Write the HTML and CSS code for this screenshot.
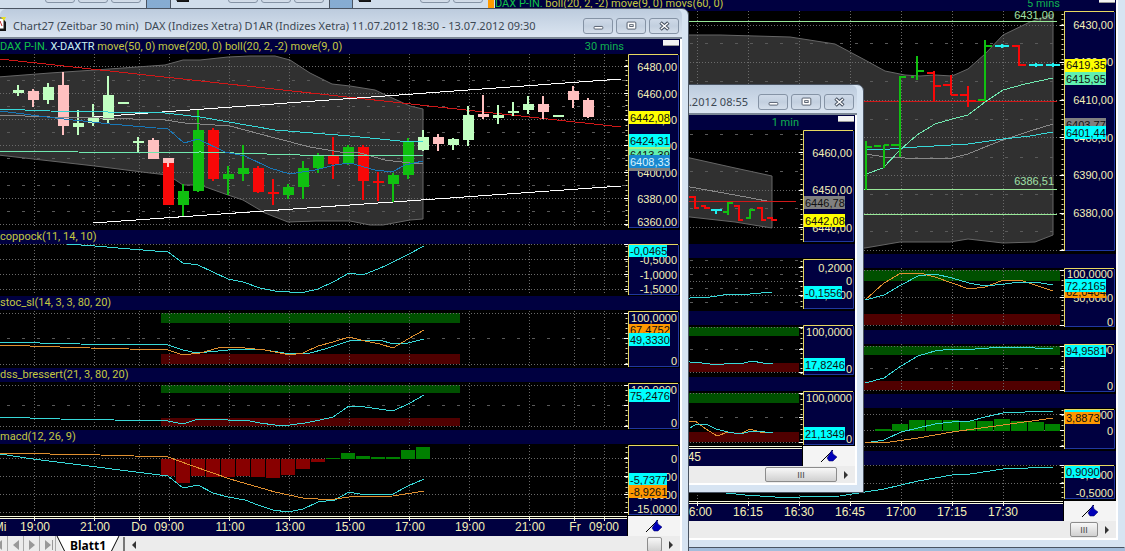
FILE: index.html
```html
<!DOCTYPE html>
<html lang="de">
<head>
<meta charset="utf-8">
<title>Chart27</title>
<link rel="stylesheet" href="styles.css">
</head>
<body>
<svg class="defs" aria-hidden="true">
  <symbol id="min" viewBox="0 0 30 16"><rect x="10.5" y="8.5" width="10" height="3" rx="1" fill="#fff" stroke="#465060"/></symbol>
  <symbol id="max" viewBox="0 0 30 16"><rect x="10.5" y="3.500" width="10" height="8" rx="1" fill="#fff" stroke="#465060"/><rect x="13.500" y="6.500" width="4" height="2" fill="#fff" stroke="#465060"/></symbol>
  <symbol id="close" viewBox="0 0 30 16"><path d="M11 4l9 8M20 4l-9 8" stroke="#465060" stroke-width="4"/><path d="M11.500 4.500l8 7M19.500 4.500l-8 7" stroke="#fff" stroke-width="1.600"/></symbol>
  <symbol id="restore" viewBox="0 0 30 16"><path d="M13.500 5.500v-3h8v6h-3" fill="#fff" stroke="#465060"/><rect x="9.500" y="5.500" width="8" height="6" fill="#fff" stroke="#465060"/><rect x="12.500" y="7.500" width="2" height="2" fill="none" stroke="#465060"/></symbol>
  <symbol id="doc" viewBox="0 0 16 16"><path d="M2 3h9l3 3v9H2z" fill="#111"/><path d="M1 2h9l2 2v9H1z" fill="#fff" stroke="#222"/><path d="M9 1h5l-2 4z" fill="#e8e020"/><path d="M2 10l2-4 2 4 2-5 2 5" fill="none" stroke="#c03030"/></symbol>
  <symbol id="flag" viewBox="0 0 18 14"><path d="M1 13L13 1" stroke="#000"/><path d="M12 1l1 4 4 3-4 4h-4l-2-3z" fill="#0000b8" stroke="#000060" stroke-width=".500"/></symbol>
</svg>
<main class="desktop">

  <section class="win mini mini-a"><span class="grow"></span>
    <button class="wbtn" aria-label="Wiederherstellen"></button><button class="wbtn" aria-label="Maximieren"></button><button class="wbtn" aria-label="Schließen"></button></section>
  <section class="win mini mini-b"><svg class="doc"><use href="#doc"/></svg><span class="grow">Cha...</span>
    <button class="wbtn" aria-label="Wiederherstellen"><svg><use href="#restore"/></svg></button><button class="wbtn" aria-label="Maximieren"><svg><use href="#max"/></svg></button><button class="wbtn" aria-label="Schließen"><svg><use href="#close"/></svg></button></section>
  <section class="win mini mini-c"><svg class="doc"><use href="#doc"/></svg><span class="grow">Cha...</span>
    <button class="wbtn" aria-label="Wiederherstellen"><svg><use href="#restore"/></svg></button><button class="wbtn" aria-label="Maximieren"><svg><use href="#max"/></svg></button></section>

  <section class="win win-five">
    <div class="client">
      <header class="head"><span class="names"><b class="sym">DAX P-IN.</b> boll(20, 2, -2) move(9, 0) movs(60, 0)</span><span class="period">5 mins</span><button class="chip" aria-label="Menü"></button></header>
      <div class="plot"><svg width="621" height="243" viewBox="495 11 621 243">
        <polygon class="band-fill" points="493,36 690,35 720,35 790,37 835,44 865,60 885,71 905,75 920,76 935,75 952,76 968,69 985,54 1003,35 1030,22 1053,14 1053,235 1035,242 1003,243 968,239 950,242 900,242 865,248 690,251 493,251"/>
        <path class="grid" d="M697.500 11V251M748.500 11V251M799.500 11V251M850.500 11V251M901.500 11V251M952.500 11V251M1003.500 11V251M495 25.500H1060M495 62.500H1060M495 100.500H1060M495 137.500H1060M495 175.500H1060M495 213.500H1060M495 250.500H1060"/>
        <path class="sub" d="M495 43.500H1060M495 81.500H1060M495 119.500H1060M495 157.500H1060M495 194.500H1060M495 231.500H1060"/>
        <path class="lime" d="M495 21.500H1057M495 189.500H1057M495 214.500H1057"/>
        <path class="red" d="M495 101.500H1057"/>
        <polyline class="gray" points="866,154 885,157 905,158 952,158 968,154 985,147 1003,140 1030,131 1053,124"/>
        <polyline class="cyan" points="866,149 890,149 917,147 968,144 1003,139 1030,136 1053,132"/>
        <polyline class="mint" points="866,174 883,168 900,150 917,135 935,124 952,119 968,115 985,102 1003,90 1025,84 1053,78"/>
        <path class="bar thin up" d="M866 141V190M866 147H872M874 146H881M884 168V145M884 145H889M891 145H900M900 157V76M900 77H906M911 77H914M917 56V80M917 71H924M978 100H986M985 101V40M985 46H992"/>
        <path class="bar thin down" d="M927 73H934M934 71V101M935 86H941M943 85H951M951 75V95M951 95H958M960 95H968M968 86V107M968 101H976M1012 46H1019V65H1026"/>
        <path class="bar thin flat" d="M995 46H1009M1002 44V48M1029 65H1043M1036 63V67M1046 65H1060M1053 63V67"/>
        <text class="val level" x="1054" y="19">6431,00</text><text class="val level" x="1054" y="185">6386,51</text>
        <rect class="axis" x="1064" y="11" width="50" height="240"/><path class="edge-a" d="M1064.500 251V11.500H1114"/><path class="edge-b" d="M1065 250.500H1114.500V12"/>
        <path class="minor" d="M1062.500 14V251"/><path class="major" d="M1060 25.500h4M1060 62.500h4M1060 100.500h4M1060 137.500h4M1060 175.500h4M1060 213.500h4M1060 250.500h4"/>
        <g class="val"><text x="1113" y="29">6430,00</text><text x="1113" y="66">6420,00</text><text x="1113" y="104">6410,00</text><text x="1113" y="142">6400,00</text><text x="1113" y="179">6390,00</text><text x="1113" y="217">6380,00</text></g>
        <g class="tag"><rect class="f-yellow" x="1065" y="59" width="41" height="13"/><text x="1066" y="69">6419,35</text>
        <rect class="f-mint" x="1065" y="72" width="41" height="13"/><text x="1066" y="83">6415,95</text>
        <rect class="f-gray" x="1065" y="118" width="41" height="13"/><text x="1066" y="129">6403,77</text>
        <rect class="f-cyan" x="1065" y="126" width="41" height="13"/><text x="1066" y="137">6401,44</text></g>
      </svg></div>
      <header class="band"></header>
      <div class="plot"><svg width="621" height="62" viewBox="495 268 621 62">
        <rect class="hi" x="495" y="270" width="565" height="11"/><rect class="lo" x="495" y="314" width="565" height="11"/>
        <path class="grid" d="M901.500 268V327M952.500 268V327M1003.500 268V327M495 270.500H1060M495 297.500H1060M495 325.500H1060"/>
        <polyline class="orange" points="865,300 884,283 901,273 920,273 935,277 952,283 969,289 985,287 1001,281 1020,280 1035,285 1053,291"/>
        <polyline class="cyan" points="865,300 884,295 901,285 918,276 935,274 952,278 969,283 985,286 1005,284 1020,282 1035,282 1053,285"/>
        <rect class="axis" x="1064" y="268" width="50" height="59"/><path class="edge-a" d="M1064.500 327V268.500H1114"/><path class="edge-b" d="M1065 326.500H1114.500V269"/>
        <path class="minor" d="M1062.500 270V327"/><path class="major" d="M1060 270.500h4M1060 297.500h4M1060 325.500h4"/>
        <g class="val"><text x="1113" y="278">100,0000</text><text x="1113" y="302">50,0000</text><text x="1113" y="326">0</text></g>
        <g class="tag"><rect class="f-orange" x="1065" y="285" width="41" height="13"/><text x="1066" y="296">62,0404</text>
        <rect class="f-cyan" x="1065" y="279" width="41" height="13"/><text x="1066" y="290">72,2165</text></g>
      </svg></div>
      <header class="band"></header>
      <div class="plot"><svg width="621" height="50" viewBox="495 344 621 50">
        <rect class="hi" x="495" y="346" width="565" height="9"/><rect class="lo" x="495" y="381" width="565" height="9"/>
        <path class="grid" d="M901.500 344V392M952.500 344V392M1003.500 344V392M495 346.500H1060M495 390.500H1060"/><path class="sub" d="M495 368.500H1060"/>
        <polyline class="cyan" points="865,383 884,378 901,366 918,356 935,351 952,349 975,349 1003,347 1020,347 1035,348 1053,348"/>
        <rect class="axis" x="1064" y="344" width="50" height="48"/><path class="edge-a" d="M1064.500 392V344.500H1114"/><path class="edge-b" d="M1065 391.500H1114.500V345"/>
        <path class="minor" d="M1062.500 346V391"/><path class="major" d="M1060 346.500h4M1060 368.500h4M1060 390.500h4"/>
        <g class="val"><text x="1113" y="354">100,0000</text><text x="1113" y="390">0</text></g>
        <g class="tag"><rect class="f-cyan" x="1065" y="345" width="41" height="12"/><text x="1066" y="355">94,9581</text></g>
      </svg></div>
      <header class="band"></header>
      <div class="plot"><svg width="621" height="43" viewBox="495 408 621 43">
        <path class="grid" d="M901.500 408V449M952.500 408V449M1003.500 408V449M495 414.500H1060M495 430.500H1060M495 446.500H1060"/>
        <path class="bar-up" d="M875 429h16v2h-16zM892 424h16v7h-16zM909 420h16v11h-16zM926 420h16v11h-16zM943 420h16v11h-16zM960 421h16v10h-16zM977 421h16v10h-16zM994 419h16v12h-16zM1011 421h16v10h-16zM1028 422h16v9h-16zM1045 424h15v7h-15z"/>
        <polyline class="cyan" points="865,443 884,440 901,432 918,428 935,424 952,422 970,421 985,417 1003,413 1025,412 1053,411"/>
        <polyline class="orange" points="865,443 890,442 918,438 952,432 1003,425 1053,418"/>
        <rect class="axis" x="1064" y="409" width="50" height="40"/><path class="edge-a" d="M1064.500 449V409.500H1114"/><path class="edge-b" d="M1065 448.500H1114.500V410"/>
        <path class="minor" d="M1062.500 410V447"/><path class="major" d="M1060 414.500h4M1060 430.500h4M1060 446.500h4"/>
        <g class="val"><text x="1113" y="419">5,0000</text><text x="1113" y="435">0</text></g>
        <g class="tag"><rect class="f-cyan" x="1065" y="410" width="35" height="12"/><rect class="f-orange" x="1065" y="412" width="35" height="12"/><text x="1066" y="422">3,8873</text></g>
      </svg></div>
      <header class="band"></header>
      <div class="plot"><svg width="621" height="36" viewBox="495 465 621 36">
        <path class="grid" d="M697.500 465V501M748.500 465V501M799.500 465V501M850.500 465V501M901.500 465V501M952.500 465V501M1003.500 465V501M495 465.500H1060M495 483.500H1060"/>
        <polyline class="cyan" points="726,493 745,495 775,497 800,497 840,496 865,492 884,489 918,481 952,475 970,474 1003,469 1053,467"/>
        <rect class="axis" x="1064" y="465" width="50" height="34"/><path class="edge-a" d="M1064.500 499V465.500H1114"/><path class="edge-b" d="M1065 498.500H1114.500V466"/>
        <path class="minor" d="M1062.500 467V499"/><path class="major" d="M1060 465.500h4M1060 483.500h4"/>
        <g class="val"><text x="1113" y="479">0,0000</text><text x="1113" y="497">-0,5000</text></g>
        <g class="tag"><rect class="f-cyan" x="1065" y="466" width="35" height="12"/><text x="1066" y="476">0,9090</text></g>
      </svg></div>
      <div class="plot"><svg width="621" height="20" viewBox="495 501 621 20">
        <rect class="axis" x="495" y="504" width="568" height="17"/><path class="rule" d="M495 501.500H1063M495 503.500H1063M697.500 501v5M748.500 501v5M799.500 501v5M850.500 501v5M901.500 501v5M952.500 501v5M1003.500 501v5"/>
        <g class="time"><text x="697" y="516">16:00</text><text x="748" y="516">16:15</text><text x="799" y="516">16:30</text><text x="850" y="516">16:45</text><text x="901" y="516">17:00</text><text x="952" y="516">17:15</text><text x="1003" y="516">17:30</text></g>
        <rect class="corner" x="1064" y="501" width="52" height="20"/><use href="#flag" x="1081" y="504" width="18" height="14"/>
      </svg></div>
      <div class="scroll"><span class="grow"></span><button class="thumb thumb-s" aria-label="Bildlauf">III</button><button class="arrow" aria-label="Rechts"></button></div>
    </div>
  </section>

  <section class="win win-one">
    <header class="title"><h2 class="grow right">13.07.2012 08:55</h2>
      <button class="wbtn" aria-label="Minimieren"><svg><use href="#min"/></svg></button><button class="wbtn" aria-label="Maximieren"><svg><use href="#max"/></svg></button><button class="wbtn" aria-label="Schließen"><svg><use href="#close"/></svg></button></header>
    <div class="client">
      <header class="head"><span class="names"></span><span class="period">1 min</span><button class="chip" aria-label="Menü"></button></header>
      <div class="plot"><svg width="255" height="114" viewBox="600 130 255 114">
        <polygon class="band-fill" points="598,140 690,158 735,168 772,176 772,228 735,222 690,217 598,210"/>
        <path class="grid" d="M600 152.500H800M600 190.500H800M600 227.500H800"/><path class="sub" d="M600 134.500H800M600 171.500H800M600 208.500H800"/>
        <polyline class="gray" points="600,172 690,187 735,195 772,202"/><path class="red" d="M600 201.500H796"/>
        <path class="bar thin down" d="M689 197H695V208H699M701 206H705V208H710M734 206H739V220H743M757 208H762V220H766M767 218H772V220H777"/>
        <path class="bar thin up" d="M723 212H728V215V203H733M746 218H750V210H755"/><path class="bar thin flat" d="M711 210H722M716 209V214"/>
        <rect class="axis" x="803" y="130" width="50" height="112"/><path class="edge-a" d="M803.500 242V130.500H853"/><path class="edge-b" d="M804 241.500H853.500V131"/>
        <path class="minor" d="M801.500 134V242"/><path class="major" d="M799 152.500h4M799 190.500h4M799 227.500h4"/>
        <g class="val"><text x="852" y="157">6460,00</text><text x="852" y="194">6450,00</text><text x="852" y="232">6440,00</text></g>
        <g class="tag"><rect class="f-gray" x="804" y="196" width="41" height="13"/><text x="805" y="207">6446,78</text>
        <rect class="f-yellow" x="804" y="214" width="41" height="13"/><text x="805" y="225">6442,08</text></g>
      </svg></div>
      <header class="band"></header>
      <div class="plot"><svg width="255" height="53" viewBox="600 258 255 53">
        <path class="grid" d="M600 267.500H800M600 281.500H800M600 295.500H800"/><path class="sub" d="M600 260.500H800M600 274.500H800M600 288.500H800M600 302.500H800"/>
        <polyline class="cyan" points="600,304 690,298 710,297 730,294 750,294 772,292"/>
        <rect class="axis" x="803" y="259" width="50" height="50"/><path class="edge-a" d="M803.500 309V259.500H853"/><path class="edge-b" d="M804 308.500H853.500V260"/>
        <path class="minor" d="M801.500 261V307"/><path class="major" d="M799 267.500h4M799 281.500h4M799 295.500h4"/>
        <g class="val"><text x="852" y="272">0,2000</text><text x="852" y="285">0</text><text x="852" y="299">-0,2000</text></g>
        <g class="tag"><rect class="f-cyan" x="804" y="286" width="38" height="13"/><text x="805" y="297">-0,1556</text></g>
      </svg></div>
      <header class="band"></header>
      <div class="plot"><svg width="255" height="52" viewBox="600 325 255 52">
        <rect class="hi" x="600" y="327" width="199" height="9"/><rect class="lo" x="600" y="363" width="199" height="9"/>
        <path class="grid" d="M600 327.500H800M600 372.500H800"/><path class="sub" d="M600 349.500H800"/>
        <polyline class="cyan" points="600,360 690,362 702,363 718,365 730,363 740,364 752,361 763,363 773,364"/>
        <rect class="axis" x="803" y="325" width="50" height="50"/><path class="edge-a" d="M803.500 375V325.500H853"/><path class="edge-b" d="M804 374.500H853.500V326"/>
        <path class="minor" d="M801.500 328V374"/><path class="major" d="M799 327.500h4M799 349.500h4M799 372.500h4"/>
        <g class="val"><text x="852" y="336">100,0000</text><text x="852" y="373">0</text></g>
        <g class="tag"><rect class="f-cyan" x="804" y="358" width="41" height="13"/><text x="805" y="369">17,8246</text></g>
      </svg></div>
      <header class="band"></header>
      <div class="plot"><svg width="255" height="55" viewBox="600 391 255 55">
        <rect class="hi" x="600" y="393" width="199" height="10"/><rect class="lo" x="600" y="432" width="199" height="10"/>
        <path class="grid" d="M600 393.500H800M600 442.500H800"/><path class="sub" d="M600 417.500H800"/>
        <polyline class="orange" points="600,425 690,421 695,421 706,429 717,436 728,432 740,434 750,429 760,432 773,433"/>
        <polyline class="cyan" points="600,430 690,428 695,425 706,424 716,429 728,432 740,434 752,431 765,432 773,432"/>
        <rect class="axis" x="803" y="391" width="50" height="54"/><path class="edge-a" d="M803.500 445V391.500H853"/><path class="edge-b" d="M804 444.500H853.500V392"/>
        <path class="minor" d="M801.500 394V444"/><path class="major" d="M799 393.500h4M799 417.500h4M799 442.500h4"/>
        <g class="val"><text x="852" y="402">100,0000</text><text x="852" y="443">0</text></g>
        <g class="tag"><rect class="f-cyan" x="804" y="427" width="41" height="13"/><text x="805" y="438">21,1349</text></g>
      </svg></div>
      <div class="plot"><svg width="255" height="20" viewBox="600 446 255 20">
        <rect class="axis" x="600" y="449" width="202" height="17"/><path class="rule" d="M600 446.500H802M600 448.500H802"/>
        <g class="time"><text x="686" y="461">16:45</text></g>
        <rect class="corner" x="803" y="446" width="52" height="20"/><use href="#flag" x="820" y="449" width="18" height="14"/>
      </svg></div>
      <div class="scroll"><span class="grow"></span><button class="thumb thumb-l" aria-label="Bildlauf">III</button><button class="arrow" aria-label="Rechts"></button></div>
    </div>
  </section>

  <section class="win win-main">
    <header class="title"><svg class="doc"><use href="#doc"/></svg><h1 class="grow">Chart27 (Zeitbar 30 min)&nbsp; DAX (Indizes Xetra) D1AR (Indizes Xetra) 11.07.2012 18:30 - 13.07.2012 09:30</h1>
      <button class="wbtn" aria-label="Minimieren"><svg><use href="#min"/></svg></button><button class="wbtn" aria-label="Maximieren"><svg><use href="#max"/></svg></button><button class="wbtn" aria-label="Schließen"><svg><use href="#close"/></svg></button></header>
    <div class="client">
      <header class="head"><span class="names"><b class="sym">DAX P-IN.</b> <b class="sym2">X-DAXTR</b> move(50, 0) move(200, 0) boll(20, 2, -2) move(9, 0)</span><span class="period">30 mins</span><button class="chip" aria-label="Menü"></button></header>
      <div class="plot"><svg width="680" height="176" viewBox="0 54 680 176">
        <polygon class="band-fill" points="-2,77 50,73 95,70 165,65 183,60 200,60 228,57 250,56 275,56 290,60 310,73 332,84 350,86 375,90 390,97 410,106 423,109 423,219 410,220 383,225 370,225 350,221 316,221 288,222 265,213 243,200 228,195 200,185 183,185 168,175 150,173 95,166 -2,155"/>
        <path class="grid" d="M34.500 54V228M94.500 54V228M139.500 54V228M169.500 54V228M229.500 54V228M289.500 54V228M349.500 54V228M409.500 54V228M469.500 54V228M529.500 54V228M574.500 54V228M604.500 54V228M0 66.500H625M0 93.500H625M0 119.500H625M0 145.500H625M0 172.500H625M0 198.500H625M0 224.500H625"/>
        <path class="sub" d="M7 80.500H625M7 106.500H625M7 132.500H625M7 158.500H625M7 185.500H625M7 211.500H625"/>
        <path class="red" d="M0 59L621 127"/><path class="white" d="M93 117L621 79M93 223L621 186"/>
        <path class="wick paleup" d="M18 85V96M48 83V104M78 110V135M93 104V126M108 76V123M138 137V152M423 130V151M453 138V150M468 106V146M498 105V124M513 102V116M528 96V114"/>
        <path class="wick paledown" d="M33 89V107M63 72V135M153 138V159M168 158V167M438 134V151M483 95V119M543 96V119M573 86V108M588 98V118"/>
        <path class="wick up" d="M183 184V216M198 110V192M228 166V195M243 145V181M288 184V199M303 161V199M318 153V173M348 145V165M393 173V202M408 138V179"/>
        <path class="wick down" d="M213 128V181M258 166V193M273 179V205M333 137V179M363 145V200M378 172V201"/>
        <path class="body paleup" d="M18 90V93M48 87V100M78 123V127M93 118V123M108 95V120M123 102V104M138 141V143M423 137V150M453 139V145M468 115V140M498 115V118M513 111V113M528 104V110M558 115V117"/>
        <path class="body paledown" d="M33 91V100M63 85V126M153 140V159M168 158V163M438 137V144M483 114V117M543 104V112M573 91V100M588 100V117"/>
        <path class="body up" d="M183 191V205M198 130V191M228 174V179M243 168V174M288 187V195M303 168V187M318 155V168M348 147V164M393 175V184M408 141V175"/>
        <path class="body down" d="M168 163V205M213 130V179M258 168V192M273 192V194M333 155V164M363 147V181M378 181V183"/>
        <path class="wick paledown" d="M168 162V167"/>
        <polyline class="gray" points="0,115 50,117 100,118 165,120 185,123 230,126 275,138 310,147 340,152 360,153 385,160 410,163 423,164"/>
        <polyline class="mint" points="0,151 78,152 140,153 200,152 300,155 423,155"/>
        <polyline class="cyan" points="0,109 50,111 165,113 200,117 275,130 350,136 400,141 423,141"/>
        <polyline class="blue" points="0,111 55,118 110,124 168,129 184,143 198,139 225,152 245,156 270,168 290,174 315,170 335,165 350,163 375,170 392,172 405,165 423,161"/>
        <rect class="axis" x="628" y="54" width="50" height="174"/><path class="edge-a" d="M628.500 228V54.500H678"/><path class="edge-b" d="M629 227.500H678.500V55"/>
        <path class="minor" d="M626.500 60V228"/><path class="major" d="M624 66.500h4M624 93.500h4M624 119.500h4M624 145.500h4M624 172.500h4M624 198.500h4M624 224.500h4"/>
        <g class="val"><text x="677" y="71">6480,00</text><text x="677" y="98">6460,00</text><text x="677" y="124">6440,00</text><text x="677" y="150">6420,00</text><text x="677" y="177">6400,00</text><text x="677" y="203">6380,00</text><text x="677" y="226">6360,00</text></g>
        <g class="tag"><rect class="f-yellow" x="629" y="111" width="41" height="13"/><text x="630" y="122">6442,08</text>
        <rect class="f-gray" x="629" y="157" width="41" height="14"/>
        <rect class="f-lime" x="629" y="145" width="41" height="12"/><rect class="f-mint" x="629" y="149" width="41" height="12"/><text x="630" y="159">6413,39</text>
        <rect class="f-cyan" x="629" y="134" width="41" height="13"/><text x="630" y="145">6424,31</text>
        <rect class="f-blue" x="629" y="155" width="41" height="13"/><text class="light" x="630" y="166">6408,33</text></g>
      </svg></div>
      <header class="band">coppock(11, 14, 10)</header>
      <div class="plot"><svg width="680" height="52" viewBox="0 244 680 52">
        <path class="grid" d="M34.500 244V294M94.500 244V294M139.500 244V294M169.500 244V294M229.500 244V294M289.500 244V294M349.500 244V294M409.500 244V294M469.500 244V294M529.500 244V294M574.500 244V294M604.500 244V294M0 244.500H625M0 259.500H625M0 274.500H625M0 289.500H625"/>
        <polyline class="cyan" points="67,244 95,246 130,249 168,252 183,263 198,265 228,279 243,282 260,288 275,291 290,292 305,292 318,289 335,281 349,273 363,275 385,266 409,254 424,246"/>
        <rect class="axis" x="628" y="244" width="50" height="51"/><path class="edge-a" d="M628.500 295V244.500H678"/><path class="edge-b" d="M629 294.500H678.500V245"/>
        <path class="minor" d="M626.500 246V293"/><path class="major" d="M624 244.500h4M624 259.500h4M624 274.500h4M624 289.500h4"/>
        <g class="val"><text x="677" y="264">-0,5000</text><text x="677" y="279">-1,0000</text><text x="677" y="293">-1,5000</text></g>
        <g class="tag"><rect class="f-cyan" x="629" y="245" width="38" height="12"/><text x="630" y="255">-0,0465</text></g>
      </svg></div>
      <header class="band">stoc_sl(14, 3, 3, 80, 20)</header>
      <div class="plot"><svg width="680" height="58" viewBox="0 310 680 58">
        <rect class="hi" x="161" y="313" width="299" height="10"/><rect class="lo" x="161" y="354" width="299" height="10"/>
        <path class="grid" d="M34.500 311V366M94.500 311V366M139.500 311V366M169.500 311V366M229.500 311V366M289.500 311V366M349.500 311V366M409.500 311V366M469.500 311V366M529.500 311V366M574.500 311V366M604.500 311V366M0 313.500H625M0 364.500H625"/><path class="sub" d="M7 338.500H625"/>
        <polyline class="cyan" points="0,342 80,344 168,345 183,350 197,353 228,350 250,349 265,350 290,354 310,353 325,349 349,341 365,340 380,340 393,344 408,343 424,339"/>
        <polyline class="orange" points="0,345 90,348 168,350 183,355 200,353 218,348 235,347 265,350 290,355 303,353 318,346 333,342 349,337 365,341 380,344 393,348 408,339 424,330"/>
        <rect class="axis" x="628" y="311" width="50" height="56"/><path class="edge-a" d="M628.500 367V311.500H678"/><path class="edge-b" d="M629 366.500H678.500V312"/>
        <path class="minor" d="M626.500 313V365"/><path class="major" d="M624 313.500h4M624 338.500h4M624 364.500h4"/>
        <g class="val"><text x="677" y="322">100,0000</text><text x="677" y="365">0</text></g>
        <g class="tag"><rect class="f-orange" x="629" y="324" width="41" height="12"/><text x="630" y="334">67,4752</text>
        <rect class="f-cyan" x="629" y="333" width="41" height="13"/><text x="630" y="344">49,3330</text></g>
      </svg></div>
      <header class="band">dss_bressert(21, 3, 80, 20)</header>
      <div class="plot"><svg width="680" height="48" viewBox="0 382 680 48">
        <rect class="hi" x="161" y="385" width="299" height="8"/><rect class="lo" x="161" y="418" width="299" height="8"/>
        <path class="grid" d="M34.500 383V428M94.500 383V428M139.500 383V428M169.500 383V428M229.500 383V428M289.500 383V428M349.500 383V428M409.500 383V428M469.500 383V428M529.500 383V428M574.500 383V428M604.500 383V428M0 385.500H625M0 426.500H625"/><path class="sub" d="M7 405.500H625"/>
        <polyline class="cyan" points="0,417 60,419 168,421 183,424 198,419 228,420 245,420 260,423 275,425 290,425 305,423 320,420 333,417 349,406 365,407 393,411 410,403 424,395"/>
        <rect class="axis" x="628" y="383" width="50" height="46"/><path class="edge-a" d="M628.500 429V383.500H678"/><path class="edge-b" d="M629 428.500H678.500V384"/>
        <path class="minor" d="M626.500 385V427"/><path class="major" d="M624 385.500h4M624 405.500h4M624 426.500h4"/>
        <g class="val"><text x="677" y="394">100,0000</text><text x="677" y="427">0</text></g>
        <g class="tag"><rect class="f-cyan" x="629" y="389" width="41" height="13"/><text x="630" y="400">75,2476</text></g>
      </svg></div>
      <header class="band">macd(12, 26, 9)</header>
      <div class="plot"><svg width="680" height="72" viewBox="0 444 680 72">
        <path class="grid" d="M34.500 445V516M94.500 445V516M139.500 445V516M169.500 445V516M229.500 445V516M289.500 445V516M349.500 445V516M409.500 445V516M469.500 445V516M529.500 445V516M574.500 445V516M604.500 445V516M0 458.500H625M0 476.500H625M0 494.500H625M0 512.500H625"/>
        <path class="bar-down" d="M161 459h14v17h-14zM176 459h14v24h-14zM191 459h14v17h-14zM206 459h14v18h-14zM221 459h14v18h-14zM236 459h14v17h-14zM251 459h14v18h-14zM266 459h14v19h-14zM281 459h14v16h-14zM296 459h14v10h-14zM311 459h14v3h-14z"/>
        <path class="bar-up" d="M326 458h14v1h-14zM341 453h14v6h-14zM356 456h14v3h-14zM371 457h14v2h-14zM386 457h14v2h-14zM401 450h14v9h-14zM416 447h14v12h-14z"/>
        <polyline class="cyan" points="0,454 33,459 168,476 183,488 198,485 213,493 228,497 245,500 258,505 273,510 288,512 303,509 318,502 335,500 349,492 365,495 393,494 408,486 424,479"/>
        <polyline class="orange" points="0,453 100,455 168,457 190,465 230,479 275,492 303,498 318,499 335,499 349,497 393,496 424,491"/>
        <rect class="axis" x="628" y="445" width="50" height="70"/><path class="edge-a" d="M628.500 515V445.500H678"/><path class="edge-b" d="M629 514.500H678.500V446"/>
        <path class="minor" d="M626.500 447V513"/><path class="major" d="M624 458.500h4M624 476.500h4M624 494.500h4M624 512.500h4"/>
        <g class="val"><text x="677" y="463">0</text><text x="677" y="481">-5,0000</text><text x="677" y="499">-10,0000</text><text x="677" y="513">-15,0000</text></g>
        <g class="tag"><rect class="f-cyan" x="629" y="473" width="38" height="13"/><text x="630" y="484">-5,7377</text>
        <rect class="f-orange" x="629" y="485" width="38" height="13"/><text x="630" y="496">-8,9261</text></g>
      </svg></div>
      <div class="plot"><svg width="680" height="20" viewBox="0 516 680 20">
        <rect class="axis" x="0" y="519" width="627" height="17"/><path class="rule" d="M0 516.500H627M0 518.500H627M34.500 516v5M94.500 516v5M139.500 516v5M169.500 516v5M229.500 516v5M289.500 516v5M349.500 516v5M409.500 516v5M469.500 516v5M529.500 516v5M574.500 516v5M604.500 516v5"/>
        <g class="time"><text x="0" y="531">Mi</text><text x="35" y="531">19:00</text><text x="95" y="531">21:00</text><text x="139" y="531">Do</text><text x="169" y="531">09:00</text><text x="230" y="531">11:00</text><text x="290" y="531">13:00</text><text x="350" y="531">15:00</text><text x="410" y="531">17:00</text><text x="470" y="531">19:00</text><text x="530" y="531">21:00</text><text x="575" y="531">Fr</text><text x="604" y="531">09:00</text></g>
        <rect class="corner" x="628" y="516" width="52" height="20"/><use href="#flag" x="645" y="519" width="18" height="14"/>
      </svg></div>
      <nav class="tabs">
        <button class="nav" aria-label="Erstes Blatt"><svg viewBox="0 0 16 16"><path d="M2 3v10L-4 8z"/></svg></button><button class="nav" aria-label="Vorheriges Blatt"><svg viewBox="0 0 16 16"><path d="M11 3v10L5 8z"/></svg></button><button class="nav" aria-label="Nächstes Blatt"><svg viewBox="0 0 16 16"><path d="M5 3v10l6-5z"/></svg></button><button class="nav" aria-label="Letztes Blatt"><svg viewBox="0 0 16 16"><path d="M5 3v10l6-5zM12 3h1v10h-1z"/></svg></button>
        <button class="tab"><svg viewBox="0 0 64 18"><path d="M0 0h64L54 18H8z" fill="#fff"/><path d="M1 0l9 18M63 0l-9 18" stroke="#000" fill="none"/></svg><span>Blatt1</span></button>
        <span class="split"></span>
        <button class="arrow left" aria-label="Links"></button><span class="grow"></span><button class="thumb thumb-xs" aria-label="Bildlauf"></button><button class="arrow" aria-label="Rechts"></button>
      </nav>
    </div>
  </section>
</main>
</body>
</html>
```

FILE: styles.css
```css
* { box-sizing: border-box; }
body { margin: 0; font-family: "Liberation Sans", Arial, sans-serif; font-size: 11px; }
button { margin: 0; padding: 0; border: 0; background: none; font: inherit; }
.defs { display: none; }
.grow { flex: 1; }

.desktop { position: relative; height: 100vh; overflow: hidden; background: linear-gradient(#86acd2, #a3bddb); }

/* windows */
.win { position: absolute; background: #d7e4f2; border: 1px solid #4a5462; }
.win-five { top: -5px; left: 488px; right: 0; padding: 0 6px 7px; border-left-color: #ff9a00; box-shadow: inset 5px 0 #ff9a00; border-right-color: #d7e4f2; }
.win-one { top: 84px; left: 593px; width: 271px; padding: 0 6px 7px; border-radius: 7px 7px 0 0; }
.win-main { top: 8px; left: -8px; width: 697px; padding: 0 6px 7px 7px; border-radius: 7px 7px 0 0; }
.client { border-right: 2px solid #fff; border-bottom: 2px solid #fff; background: #000; }

.title { display: flex; align-items: center; gap: 3px; height: 30px; background: linear-gradient(#bccbdd, #dbe5f1); border-bottom: 2px solid #7b8795; padding: 5px 3px 0 0; border-radius: 6px 6px 0 0; }
.title h1, .title h2, .mini { font-family: "Noto Sans", "Open Sans", sans-serif; font-size: 11px; font-weight: 400; color: #3c4854; white-space: nowrap; }
.title h1, .title h2 { margin: 0; }
.title .right { text-align: right; padding-right: 7px; }
.doc { width: 16px; height: 16px; flex: none; }
.win-main .doc { margin: 0 0 3px -8px; }
.win-main h1 { padding-left: 2px; }
.wbtn { width: 30px; height: 16px; flex: none; border: 1px solid #8593a5; border-radius: 3px; background: linear-gradient(#cfdae8, #c2cfdf 50%, #d4deea); }
.wbtn svg { display: block; width: 28px; height: 14px; }

.mini { top: -20px; height: 36px; display: flex; align-items: center; gap: 3px; padding: 0 5px 6px 4px; background: #d0ddeb; }
.mini-a { left: -20px; width: 167px; }
.mini-b { left: 170px; width: 160px; }
.mini-c { left: 352px; width: 137px; }

/* indicator headings */
.head, .band { background: #000040; color: #c4c840; white-space: nowrap; font-family: Roboto, "Liberation Sans", sans-serif; font-size: 11px; }
.head { display: flex; align-items: center; height: 15px; }
.head b { font-weight: 400; }
.names { flex: 1; }
.sym { color: #10c048; }
.sym2 { color: #c8f0f0; }
.period { color: #10b050; padding-right: 39px; }
.chip { width: 16px; height: 6px; margin: 0 1px 8px 0; background: #f4f4f4; border-bottom: 1px solid #999; }
.band { height: 14px; line-height: 14px; }

/* plots */
.plot { display: flex; justify-content: flex-end; overflow: hidden; background: #000; }
.plot svg { display: block; flex: none; }
.grid, .sub { fill: none; stroke: #6a6a6a; stroke-dasharray: 1 2; shape-rendering: crispEdges; }
.sub { stroke: #5a5a5a; stroke-dasharray: 3 12; }
.band-fill { fill: #303030; stroke: #666; }
polyline, .red, .white, .lime { fill: none; stroke-width: 1; shape-rendering: crispEdges; }
.red { stroke: #d01818; }
.white { stroke: #fff; }
.lime { stroke: #98e898; }
.gray { stroke: #888; }
.mint { stroke: #70e8b0; }
.cyan { stroke: #38d8d8; }
.blue { stroke: #1878b8; }
.orange { stroke: #e09030; }
.wick { fill: none; stroke-width: 2; }
.body { fill: none; stroke-width: 11; }
.bar { fill: none; }
.thin { stroke-width: 2; }
.wick, .body, .bar { shape-rendering: crispEdges; }
.paleup { stroke: #c0ffc0; }
.paledown { stroke: #ffc0c0; }
.up { stroke: #10c010; }
.down { stroke: #f80808; }
.flat { stroke: #20f0f0; }
.hi { fill: #005000; }
.lo { fill: #500000; }
.bar-up { fill: #008000; }
.bar-down { fill: #880000; }

/* scales */
.axis { fill: #000040; }
.edge-a { fill: none; stroke: #e8d860; }
.edge-b { fill: none; stroke: #2038a0; }
.minor { fill: none; stroke: #e0e0c0; stroke-width: 2; stroke-dasharray: 1 4; }
.major { stroke: #fff; }
.val { fill: #f4f0b8; text-anchor: end; }
.level { fill: #a0e0a8; }
.tag { fill: #101010; }
.tag .light { fill: #d8f4ff; }
.time { fill: #f4f0b8; text-anchor: middle; font-size: 12px; }
.rule { stroke: #f8f8e0; }
.corner { fill: #f4f4f4; }
.f-yellow { fill: #ffff00; }
.f-cyan { fill: #00ffff; }
.f-mint { fill: #60f0b0; }
.f-lime { fill: #a0f080; }
.f-gray { fill: #808080; }
.f-orange { fill: #ff9800; }
.f-blue { fill: #1888d0; }

/* scroll bars and sheet tabs */
.scroll, .tabs { display: flex; align-items: center; height: 17px; background: #ececec; }
.thumb { height: 15px; border: 1px solid #8c8c8c; border-radius: 2px; background: linear-gradient(#f8f8f8, #d0d0d0); font-size: 9px; line-height: 12px; color: #444; text-align: center; }
.thumb-xs { width: 15px; }
.thumb-s { width: 28px; }
.thumb-l { width: 72px; }
.arrow { width: 18px; height: 15px; display: flex; align-items: center; justify-content: center; }
.arrow::before { content: ""; border: 4px solid transparent; border-left-color: #333; border-right-width: 0; }
.left::before { border: 4px solid transparent; border-right-color: #333; border-left-width: 0; }
.nav { width: 16px; height: 17px; border-right: 1px solid #aaa; }
.nav:first-child { width: 8px; }
.nav svg { display: block; width: 16px; height: 16px; fill: #999; }
.tab { display: grid; width: 64px; height: 17px; font-family: "Noto Sans", sans-serif; font-size: 12px; font-weight: 700; }
.tab > * { grid-area: 1 / 1; align-self: center; }
.tab svg { width: 64px; height: 18px; }
.split { width: 2px; height: 15px; margin-left: 3px; background: #777; }
```
